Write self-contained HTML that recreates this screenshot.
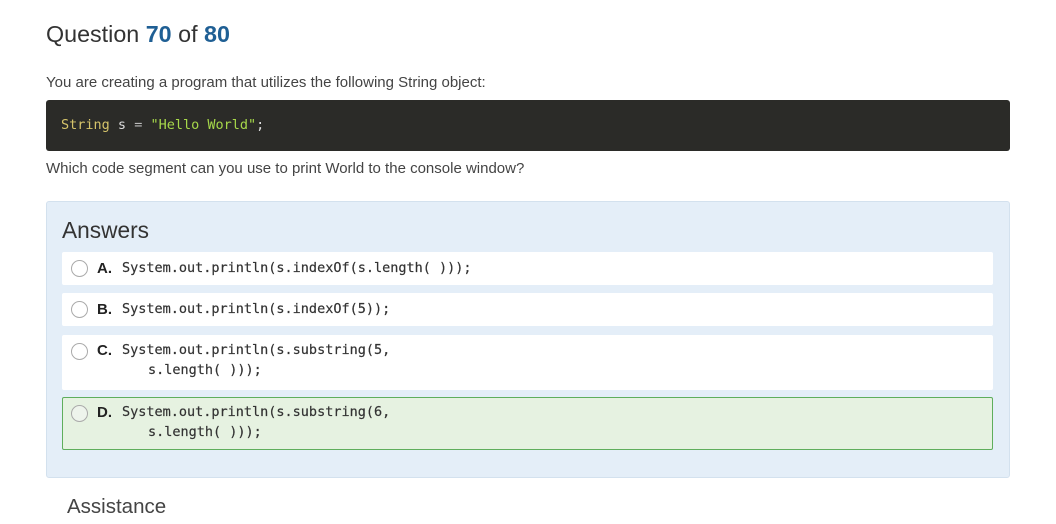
<!DOCTYPE html>
<html><head><meta charset="utf-8"><style>
*{margin:0;padding:0;box-sizing:border-box}
body{width:1056px;height:524px;background:#fff;font-family:"Liberation Sans",Arial,sans-serif;color:#333;position:relative;overflow:hidden}
.a{position:absolute;white-space:nowrap}
.mono{font-family:"DejaVu Sans Mono","Liberation Mono",monospace;font-size:13.5px;color:#333;-webkit-text-stroke:0.2px #333}
.b{color:#1f5f94;font-weight:bold}
.row{position:absolute;left:62px;width:931px;background:#fff;border-radius:2px}
.radio{position:absolute;left:9px;width:17px;height:17px;border:1px solid #aaa;border-radius:50%;background:#fff}
.lt{position:absolute;left:35px;font-weight:bold;font-size:15px;color:#222}
.cd{position:absolute;left:60px;line-height:20px}
.ind{padding-left:26px}
</style></head><body>
<div class="a" style="left:46px;top:21px;font-size:23.3px;color:#333">Question <span class="b">70</span> of <span class="b">80</span></div>
<div class="a" style="left:46px;top:74px;font-size:15px;color:#444">You are creating a program that utilizes the following String object:</div>
<div class="a" style="left:46px;top:100px;width:964px;height:51px;background:#2b2b28;border-radius:3px"></div>
<div class="a mono" style="left:61px;top:117px;-webkit-text-stroke:0"><span style="color:#d6c46a">String</span> <span style="color:#ddd">s</span> <span style="color:#bbb">=</span> <span style="color:#a6d84a">"Hello World"</span><span style="color:#ddd">;</span></div>
<div class="a" style="left:46px;top:160px;font-size:15px;color:#444">Which code segment can you use to print World to the console window?</div>
<div class="a" style="left:46px;top:201px;width:964px;height:277px;background:#e4eef8;border:1px solid #d3e1ee;border-radius:3px"></div>
<div class="a" style="left:62px;top:217px;font-size:22.7px;color:#333">Answers</div>
<div class="row" style="top:252px;height:33px"><div class="radio" style="top:8px"></div><div class="lt" style="top:8px">A.</div><div class="cd mono" style="top:6px">System.out.println(s.indexOf(s.length( )));</div></div>
<div class="row" style="top:293px;height:33px"><div class="radio" style="top:8px"></div><div class="lt" style="top:8px">B.</div><div class="cd mono" style="top:6px">System.out.println(s.indexOf(5));</div></div>
<div class="row" style="top:335px;height:55px"><div class="radio" style="top:8px"></div><div class="lt" style="top:7px">C.</div><div class="cd mono" style="top:5px">System.out.println(s.substring(5,<div class="ind">s.length( )));</div></div></div>
<div class="row" style="top:397px;height:53px;background:#e6f2e1;border:1px solid #5fae5c"><div class="radio" style="top:7px;left:8px;background:#eef4ec"></div><div class="lt" style="top:6px;left:34px">D.</div><div class="cd mono" style="top:4px;left:59px">System.out.println(s.substring(6,<div class="ind">s.length( )));</div></div></div>
<div class="a" style="left:67px;top:495px;font-size:20.5px;color:#444">Assistance</div>
</body></html>
